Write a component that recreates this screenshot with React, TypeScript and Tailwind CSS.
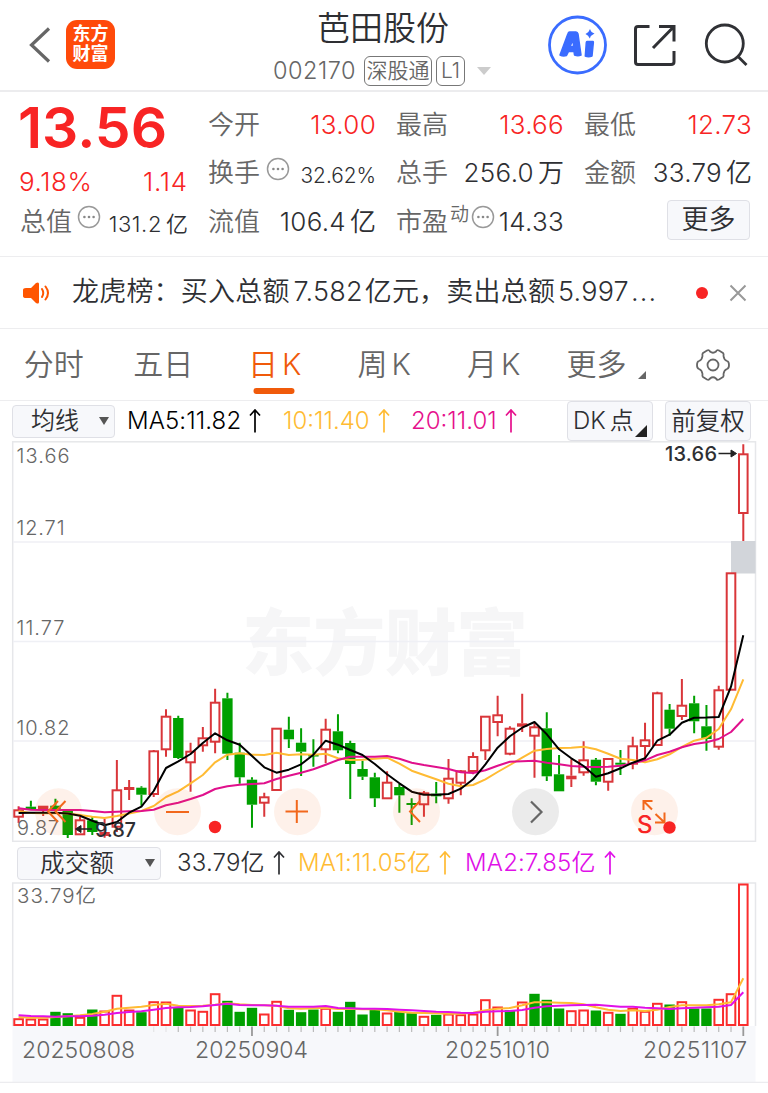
import type { ReactNode } from "react"
import clsx from "clsx"

// one row per trading day: [up, body top, body bottom, high, low, volume bar top]
const DAYS: [number, number, number, number, number, number][] = [
  [1, 810.3, 816.7, 806.3, 823, 1017.7],
  [0, 806.7, 809.3, 800.7, 810, 1018],
  [1, 805.7, 809.7, 805.7, 816, 1018],
  [0, 805.7, 810.7, 798.7, 811, 1011.3],
  [0, 811, 835, 811, 838, 1012.7],
  [1, 820.3, 834.3, 816.7, 834.5, 1016.3],
  [0, 820.3, 832, 816.7, 835, 1009],
  [1, 832, 836, 819, 837.7, 1010],
  [1, 790.3, 826.7, 760, 832, 994.3],
  [1, 787, 790, 780, 800, 1009],
  [0, 787.7, 794.7, 786.3, 805.7, 1011.7],
  [1, 751.3, 794, 750, 797, 1000.7],
  [1, 716.7, 749.3, 709.3, 756.7, 1001],
  [0, 718, 758, 715.7, 759, 1006.7],
  [1, 751.7, 762.3, 742.7, 791.7, 1009],
  [1, 738.3, 745.3, 727, 751.7, 1010.3],
  [1, 702.7, 741.7, 688.7, 753.3, 992.7],
  [0, 698.3, 753.7, 692.7, 760, 1000.3],
  [0, 752.7, 777.3, 742.7, 783.7, 1011.3],
  [0, 779.7, 804.7, 777.3, 827.7, 1007.3],
  [1, 797.3, 802.7, 792.7, 816.7, 1013],
  [1, 728.7, 790, 728.7, 790, 1000.3],
  [0, 729.7, 739.3, 716.7, 748, 1009.3],
  [0, 742.7, 751.7, 728.3, 776, 1011.7],
  [0, 755, 756, 739.3, 766.7, 1009],
  [1, 729.7, 749.3, 718.7, 763.3, 1007.3],
  [0, 731.3, 750.3, 714.3, 753.3, 1011.3],
  [0, 743, 764, 740.7, 799, 1001.3],
  [0, 769, 776.7, 760.7, 780, 1014],
  [0, 777.3, 798.3, 772.7, 807, 1009],
  [1, 782.7, 798.3, 771.3, 798.7, 1012],
  [0, 787, 795.3, 784, 812.7, 1011.3],
  [0, 803, 805, 798.3, 825, 1012.7],
  [1, 793.3, 804.3, 791, 816.7, 1015.3],
  [0, 793.7, 796.3, 782, 803.3, 1014.3],
  [1, 778.7, 798.3, 759, 803.7, 1013],
  [1, 771.3, 782.7, 770, 795.3, 1013.7],
  [1, 757, 771, 752.3, 774.3, 1013],
  [1, 716.7, 750.3, 716, 760, 998.7],
  [1, 715.3, 722, 695.7, 736.3, 1006],
  [1, 728.7, 753.7, 726.3, 755.3, 1009.7],
  [1, 723.3, 726.7, 693.7, 732, 1001],
  [1, 727.3, 735.7, 723.3, 777.7, 993.3],
  [0, 728.3, 776.3, 712.3, 781, 999.3],
  [0, 774.3, 791.3, 755, 791.3, 1008],
  [1, 775.7, 779.3, 759.3, 787, 1009.7],
  [1, 760.3, 772.3, 741.3, 775.7, 1009],
  [0, 759.7, 781.7, 758, 785.3, 1010],
  [1, 759, 781.7, 758, 790.7, 1011.3],
  [0, 762.7, 764.7, 750, 775, 1013.3],
  [1, 746.3, 763.7, 736.7, 769.3, 1007.3],
  [1, 740.3, 746, 722.7, 760, 1010.3],
  [1, 693.3, 745, 691.7, 745, 1002.3],
  [0, 709.7, 728.7, 704, 735.7, 1004],
  [1, 705.7, 716, 679, 720, 1000.7],
  [0, 703.3, 721.3, 695.7, 733.3, 1008],
  [0, 726.3, 739, 705, 750.7, 1008],
  [1, 690.3, 746.7, 685.7, 749.7, 998.3],
  [1, 573.3, 689.7, 573, 690, 992.7],
  [1, 454.3, 513, 444.3, 541, 883],
]

// volume bars of these days have the opposite colour of their candle
const FLIPPED_VOLUME = [1, 40, 42]

const MA5 = [
  813, 812.7, 812.7, 812.7, 813.5, 815.7, 820.7, 825.3, 822, 812.7, 806.7, 791, 768, 761.3, 754, 743, 733.3, 740.3,
  744.7, 756, 767.3, 772.7, 769.7, 764.3, 754.7, 740.7, 744.7, 750, 755, 764, 774.3, 783.3, 791.7, 794.7, 794.7, 794,
  788.7, 779.3, 764.3, 747.7, 736.3, 727.7, 722, 734.3, 749.3, 758.3, 766, 776.7, 773.3, 768.3, 762.7, 758.3, 740.7,
  734.7, 722.7, 717.7, 717.5, 717, 686.7, 635.3,
]
const MA10 = [
  811.3, 813, 813.3, 813, 813.5, 815, 816.7, 818, 816, 813.5, 811, 806, 797, 791.3, 783.3, 775, 762.3, 754.7, 753.3,
  754.7, 755, 752.7, 755, 754.3, 754.7, 753.7, 758.3, 760, 759.7, 758.7, 757.7, 763.7, 770.7, 775, 779.3, 783.7, 786.3,
  785, 779.3, 772, 765, 757.7, 750.7, 749, 748, 747.7, 746.7, 749.3, 753.7, 758.7, 760, 762.3, 759.3, 754.3, 747,
  740.7, 737.7, 729, 709.3, 679.3,
]
const MA20 = [
  808.3, 809.7, 810, 810, 810, 810, 811, 812.3, 811.7, 811.3, 811, 809.7, 805.3, 802.7, 799, 795, 789, 786.3, 784.7,
  784, 783.3, 779, 775.7, 772.7, 769.3, 764.7, 760, 756.7, 756.7, 756.7, 756, 758.7, 762.7, 765, 767, 769, 772.3, 773,
  770.3, 765.7, 761.7, 761.3, 760.7, 762.7, 764.3, 766, 766.7, 767, 766.7, 765.7, 763.3, 760.3, 755, 751.7, 747.3, 744,
  742.3, 739, 732, 719,
]
const VOL_MA1 = [
  1016, 1016.7, 1016.7, 1016, 1015.3, 1014.3, 1013, 1010.7, 1007.7, 1006.7, 1005.7, 1004, 1002.7, 1004.7, 1005, 1004.7,
  1003.7, 1002.3, 1003.3, 1004, 1004.3, 1004.7, 1007.3, 1007.7, 1007.3, 1006.7, 1008, 1007.7, 1008.3, 1008.3, 1009.3,
  1010.7, 1011.7, 1012, 1012.3, 1012.7, 1012.7, 1011.7, 1009.3, 1007.7, 1007, 1004.3, 1001.3, 1001.3, 1001.7, 1002,
  1003.3, 1006.3, 1008.7, 1010, 1009.3, 1010, 1008.7, 1006, 1004.3, 1004.3, 1004.3, 1003.3, 1001.3, 977.3,
]
const VOL_MA2 = [
  1014.3, 1015, 1015.3, 1015.7, 1015.3, 1015.3, 1014.7, 1013.7, 1012, 1011, 1010.3, 1008.7, 1007, 1006.3, 1006, 1005.3,
  1004, 1002.7, 1004, 1004.3, 1004.3, 1004.7, 1005.7, 1005.7, 1005.7, 1005, 1007, 1007.3, 1007.7, 1007.7, 1008, 1008.7,
  1009.3, 1010, 1010.7, 1011, 1011.7, 1012, 1010.7, 1010.3, 1010, 1009, 1006.7, 1005.3, 1004.7, 1004.3, 1004, 1003.7,
  1004.7, 1005.7, 1005.7, 1006.7, 1007.3, 1008, 1007.3, 1006.7, 1006.3, 1005.7, 1004, 991.3,
]

const xAt = (i: number) => 18.6 + i * 12.283
const toPoints = (ys: number[]) => ys.map((y, i) => `${xAt(i).toFixed(1)},${y}`).join(" ")

const Line = ({ ys, color }: { ys: number[]; color: string }) => (
  <polyline points={toPoints(ys)} fill="none" stroke={color} strokeWidth={2} strokeLinejoin="round" />
)

const Dots = ({ className }: { className?: string }) => (
  <svg viewBox="0 0 24 24" className={clsx("h-6 w-6 shrink-0", className)}>
    <circle cx="12" cy="12" r="10.5" fill="none" stroke="#999" strokeWidth="1.5" />
    <circle cx="7.4" cy="12" r="1.3" fill="#888" />
    <circle cx="12" cy="12" r="1.3" fill="#888" />
    <circle cx="16.6" cy="12" r="1.3" fill="#888" />
  </svg>
)

const UpArrow = () => (
  <svg viewBox="0 0 12 24" className="ml-2 h-6 w-3 shrink-0" fill="none" stroke="currentColor" strokeWidth="1.7">
    <path d="M6 1V23.500M1 6.500L6 1L11 6.500" />
  </svg>
)

const Header = () => (
  <header className="flex h-[92px] border-b-2 border-[#ececee]">
    <div className="flex w-[230px] items-center pl-7">
      <svg viewBox="0 0 24 40" className="h-10 w-6" fill="none" stroke="#666" strokeWidth="3.2">
        <path d="M21 3.500L3.500 20L21 36.500" />
      </svg>
      <div className="mb-0.5 ml-3.5 grid h-[49px] w-[49px] content-center rounded-[11px] bg-[#ff4a0a] text-center text-lg leading-[20px] font-bold text-white">
        <span>东方</span>
        <span>财富</span>
      </div>
    </div>
    <div className="flex w-[306px] flex-col items-center">
      <h1 className="mt-1 h-12 text-[33px] leading-[48px] text-[#2e2f33]">芭田股份</h1>
      <div className="mt-[3px] flex h-[31px] items-center pr-0.5 text-[#666]">
        <span className="mr-2 text-[23.500px] tracking-[0.5px]">002170</span>
        <span className="flex h-[30px] w-[68px] items-center justify-center rounded-md border border-[#777] text-[21px]">
          深股通
        </span>
        <span className="ml-1 flex h-[30px] w-[29px] items-center justify-center rounded-md border border-[#777] text-[21px]">
          L1
        </span>
        <svg viewBox="0 0 14 8" className="ml-3 h-2 w-3.5" fill="#ccc">
          <path d="M0 0h14l-7 8z" />
        </svg>
      </div>
    </div>
    <div className="flex flex-1 items-center pl-3">
      <svg viewBox="0 0 60 60" className="h-[60px] w-[60px]">
        <circle cx="29.500" cy="30" r="28" fill="none" stroke="#3a6cff" strokeWidth="2.800" />
        <path
          fill="#3a6cff"
          fillRule="evenodd"
          stroke="#3a6cff"
          strokeLinejoin="round"
          strokeWidth="1.5"
          d="M21.500 17h6.500Q29.500 17 30 19L33 40Q30 41.500 26.500 40L26 36.500H20.500L18.500 40.500Q15 41.500 12 40L20 18.500Q20.500 17 21.500 17zM25 25l-3 6.500h3.600zM39 26.500h6Q45.500 26.500 45.300 28L44 41Q40.500 42.500 37.300 41L38.300 27.500Q38.400 26.500 39 26.500z"
        />
        <path fill="#3a6cff" d="M42 14Q43 17.500 46.500 18.500Q43 20 41.800 23.500Q40.500 20 37.500 19Q41 17.500 42 14z" />
      </svg>
      <svg viewBox="0 0 44 44" className="ml-6 h-11 w-11" fill="none" stroke="#303135" strokeWidth="3">
        <path d="M17.500 3.500H6Q3.500 3.500 3.500 6V39Q3.500 41.500 6 41.500H39Q42 41.500 42 39V28" />
        <path d="M27 3.500H42V18.500M41.500 4L21 25" />
      </svg>
      <svg viewBox="0 0 48 48" className="ml-[26px] h-12 w-12" fill="none" stroke="#303135" strokeWidth="2.800">
        <circle cx="22.800" cy="22.500" r="18.500" />
        <path d="M35.500 35L44.500 44" />
      </svg>
    </div>
  </header>
)

type CellProps = { label: ReactNode; value: string; unit?: string; red?: boolean; size?: string }

const Cell = ({ label, value, unit, red, size = "text-[26px] tracking-[0.3px]" }: CellProps) => (
  <div className="flex h-[48.500px] items-center justify-between whitespace-nowrap">
    <span className="flex items-center text-[26px] text-[#666]">{label}</span>
    <span className={clsx(red ? "text-[#f82424]" : "text-[#2e2f33]", size)}>
      {value}
      {unit && <span className="ml-1 tracking-normal">{unit}</span>}
    </span>
  </div>
)

const Quote = () => (
  <section className="grid h-[165px] grid-cols-4 gap-x-5 border-b border-[#ededef] pt-2 pr-4 pl-5">
    <div>
      <div className="-ml-0.5 flex h-[55px] items-center text-[57px] font-semibold text-[#f82424]">13.56</div>
      <div className="flex h-[42px] items-center justify-between pt-2.5 text-[26px] text-[#f82424]">
        <span className="-ml-px tracking-[0.6px]">9.18%</span>
        <span className="tracking-[0.8px]">1.14</span>
      </div>
      <Cell label={<>总值<Dots className="mb-2 ml-[5px]" /></>} value="131.2" unit="亿" size="pt-1.5 text-[22px] tracking-[0.6px]" />
    </div>
    <div>
      <Cell label="今开" value="13.00" red />
      <Cell label={<>换手<Dots className="mb-2 ml-1.5" /></>} value="32.62%" size="pt-1.5 text-[20.800px]" />
      <Cell label="流值" value="106.4" unit="亿" />
    </div>
    <div>
      <Cell label="最高" value="13.66" red />
      <Cell label="总手" value="256.0" unit="万" />
      <Cell
        label={
          <>
            市盈<span className="mb-3 ml-0.5 text-[19px]">动</span>
            <Dots className="mb-2 ml-0.5" />
          </>
        }
        value="14.33"
      />
    </div>
    <div>
      <Cell label="最低" value="12.73" red />
      <Cell label="金额" value="33.79" unit="亿" />
      <button className="mt-[3px] mr-0.5 ml-auto flex h-10 w-[83px] items-center justify-center rounded border border-[#dfe0e6] bg-[#f7f8fb] text-[27px] text-[#2e2f33]">
        更多
      </button>
    </div>
  </section>
)

const Notice = () => (
  <section className="flex h-[72px] items-center border-b border-[#ededef] pr-[21px] pl-[22px]">
    <svg viewBox="0 0 28 24" className="h-6 w-7" fill="#ff5500">
      <path d="M4 7H9L14 2Q17 .5 17 3V21Q17 23.500 14 22L9 17H4Q1 17 1 15V9Q1 7 4 7z" />
      <path d="M20 8Q22.500 12 20 16M23.500 5.500Q28.500 12 23.500 18.500" fill="none" stroke="#ff5500" strokeWidth="2" strokeLinecap="round" />
    </svg>
    <p className="ml-[22px] w-[600px] text-[27px] tracking-[0.2px] whitespace-nowrap text-[#2e2f33]">
      龙虎榜：买入总额<span className="mr-0.5 ml-1">7.582</span>亿元，卖出总额<span className="ml-[3px]">5.997</span>
      <span className="ml-0.5 tracking-[1.200px]">...</span>
    </p>
    <span className="ml-6 h-3 w-3 rounded-full bg-[#f82424]" />
    <svg viewBox="0 0 18 18" className="ml-auto h-[18px] w-[18px]" stroke="#999" strokeWidth="2">
      <path d="M1.500 1.500L16.500 16.500M16.500 1.500L1.500 16.500" />
    </svg>
  </section>
)

const TABS = [
  ["分时", ""],
  ["五日", ""],
  ["日", "K"],
  ["周", "K"],
  ["月", "K"],
]

const Tabs = () => (
  <nav className="flex h-[72px] items-center border-b border-[#ededef] text-[30px] text-[#666]">
    {TABS.map(([name, suffix]) => {
      const active = name === "日"
      return (
        <div key={name} className={clsx("-ml-0.5 flex w-[111.500px] justify-center", suffix && "pl-1")}>
          <span className={clsx("relative flex gap-1", active && "text-[#f05a0a]")}>
            {name}
            {suffix && <span>{suffix}</span>}
            {active && <i className="absolute -bottom-[7px] left-[48%] h-1.5 w-[41px] -translate-x-1/2 rounded-full bg-[#f05a0a]" />}
          </span>
        </div>
      )
    })}
    <div className="flex w-[112px] items-end pl-[19px]">
      更多
      <svg viewBox="0 0 8 8" className="mb-2 ml-[11px] h-2 w-2 shrink-0" fill="#666">
        <path d="M8 0V8H0z" />
      </svg>
    </div>
    <svg viewBox="0 0 34 34" className="ml-9 h-[34px] w-[34px]" fill="none" stroke="#666" strokeWidth="1.8">
      <path
        strokeLinejoin="round"
        d="M11 2.500Q13 1.500 14 3.500Q17 6 20 3.500Q21 1.500 23 2.500L27 5Q28 6 27.500 8Q28 12 31 13Q33 13.500 33 17Q33 20.500 31 21Q28 22 27.500 26Q28 28 27 29L23 31.500Q21 32.500 20 30.500Q17 28 14 30.500Q13 32.500 11 31.500L7 29Q6 28 6.500 26Q6 22 3 21Q1 20.500 1 17Q1 13.500 3 13Q6 12 6.500 8Q6 6 7 5z"
      />
      <circle cx="17" cy="17" r="5.500" />
    </svg>
  </nav>
)

const MaBar = () => (
  <div className="flex h-10 items-center pl-3 text-[24px] whitespace-nowrap">
    <div className="flex h-[33px] w-[103px] items-center justify-between rounded border border-[#dfe0e6] bg-[#f7f8fb] pr-[5px] pl-[18px] text-[#2e2f33]">
      均线
      <svg viewBox="0 0 10 8" className="h-2 w-2.5" fill="#555">
        <path d="M0 0h10l-5 8z" />
      </svg>
    </div>
    <span className="ml-3 flex w-[156px] items-center tracking-[0.1px] text-black">
      MA5:11.82
      <UpArrow />
    </span>
    <span className="flex w-[128px] items-center text-[#ffbb33]">
      10:11.40
      <UpArrow />
    </span>
    <span className="flex w-[156px] items-center text-[#e6108c]">
      20:11.01
      <UpArrow />
    </span>
    <div className="relative flex h-10 w-[86px] items-center rounded border border-[#dfe0e6] bg-[#f7f8fb] pl-[5px] text-[#2e2f33]">
      DK<span className="ml-1">点</span>
      <svg viewBox="0 0 12 12" className="absolute right-[5px] bottom-[3px] h-3 w-3" fill="#222">
        <path d="M12 0V12H0z" />
      </svg>
    </div>
    <div className="ml-3 flex h-10 w-[86px] items-center justify-center rounded border border-[#dfe0e6] bg-[#f7f8fb] text-[24.500px] text-[#2e2f33]">
      前复权
    </div>
  </div>
)

const Candles = () => (
  <>
    {DAYS.map(([up, top, bottom, high, low], i) => {
      const x = xAt(i)
      const color = up ? "#d9363a" : "#00a000"
      const h = bottom - top
      return (
        <g key={i} stroke={color} strokeWidth={2}>
          <path d={`M${x} ${high}V${top}M${x} ${bottom}V${low}`} />
          {up && h > 4.5 ? (
            <rect x={x - 4.3} y={top} width={8.6} height={h} fill="none" />
          ) : (
            <rect x={x - 5.2} y={top} width={10.4} height={Math.max(h, 1.5)} fill={color} stroke="none" />
          )}
        </g>
      )
    })}
  </>
)

const BUTTONS = [58, 177, 297, 416, 535, 654]

const PriceChart = () => (
  <svg viewBox="0 441 768 401" className="block h-[401px] w-full">
    <text x="242" y="669" fontSize="72" fontWeight="900" fill="#f6f6f7" textLength="286">
      东方财富
    </text>
    <g stroke="#e6e7ea" strokeWidth="1.5" fill="none">
      <rect x="12.700" y="441.800" width="742.800" height="399.500" />
      <path d="M13 542H755M13 641.500H755M13 741H755" stroke="#eff0f5" />
    </g>
    <rect x="731" y="541" width="24.500" height="32.500" fill="#d2d5da" />
    <Candles />
    <Line ys={MA10} color="#ffbb33" />
    <Line ys={MA20} color="#e0108c" />
    <Line ys={MA5} color="#000" />
    <g fontSize="20" fill="#666">
      <text x="16.500" y="463" textLength="53">13.66</text>
      <text x="16.500" y="535" textLength="48">12.71</text>
      <text x="16.500" y="635" textLength="48">11.77</text>
      <text x="16.500" y="735" textLength="53">10.82</text>
      <text x="17" y="835" textLength="42">9.87</text>
    </g>
    <g fontSize="20" fontWeight="500" fill="#2e2f33">
      <text x="665" y="461" textLength="52">13.66</text>
      <text x="95" y="837" textLength="41">9.87</text>
    </g>
    <g fill="#222" stroke="#222" strokeWidth="1.5">
      <path d="M718.500 453.500H732" />
      <path d="M731 450L736.500 453.500L731 457z" strokeWidth="1" />
      <path d="M80 829H92" />
      <path d="M81 825.500L75.500 829L81 832.500z" strokeWidth="1" />
    </g>
    {BUTTONS.map((x) => (
      <circle key={x} cx={x + 0.5} cy="811.700" r="23.500" fill={x === 535 ? "#666" : "#f2580c"} fillOpacity={x === 535 ? 0.13 : 0.085} />
    ))}
    <g fill="none" stroke="#f2681c" strokeWidth="2">
      <path d="M58 801L48 811.500L58 822M65.500 801L55.500 811.500L65.500 822" />
      <path d="M166 812H189M285.500 811.500H308M296.800 800V823" />
      <path d="M420 801L410 811.500L420 822" />
      <path d="M652.500 801H643.500V810M644 801.500L652 809.500M655.500 814L664 822M664.500 812.500V822.500H655" />
    </g>
    <path d="M531 801.500L541.500 812L531 822.500" fill="none" stroke="#666" strokeWidth="2.200" />
    <circle cx="215" cy="827" r="6.200" fill="#f82424" />
    <circle cx="669.500" cy="827.500" r="6.200" fill="#f82424" />
    <text x="637" y="833" fontSize="24" fontWeight="500" fill="#f82424" textLength="15">
      S
    </text>
  </svg>
)

const VolumeBar = () => (
  <div className="flex h-10 items-center pt-0.5 pl-[17px] text-[24px] tracking-[0.2px] whitespace-nowrap">
    <div className="flex h-[33px] w-36 items-center justify-between rounded border border-[#dfe0e6] bg-[#f7f8fb] pr-[5px] pl-[22px] text-[#2e2f33]">
      <span className="text-[24.500px]">成交额</span>
      <svg viewBox="0 0 10 8" className="h-2 w-2.5" fill="#555">
        <path d="M0 0h10l-5 8z" />
      </svg>
    </div>
    <span className="ml-4 flex w-[121px] items-center text-[#2e2f33]">
      33.79亿
      <UpArrow />
    </span>
    <span className="flex w-[167px] items-center text-[#ffbb33]">
      MA1:11.05亿
      <UpArrow />
    </span>
    <span className="flex items-center text-[#e010e8]">
      MA2:7.85亿
      <UpArrow />
    </span>
  </div>
)

const VolumeChart = () => (
  <svg viewBox="0 881 768 201" className="block h-[201px] w-full">
    <rect x="12.500" y="1025" width="743" height="56.500" fill="#f7f8fb" />
    <path d="M12.700 1025V882H755.500V1025" fill="none" stroke="#e6e7ea" strokeWidth="1.500" />
    <path d="M0 1081.500H768" stroke="#ececef" strokeWidth="1.500" />
    {DAYS.map(([up, , , , , top], i) => {
      const red = FLIPPED_VOLUME.includes(i) ? !up : up
      return red ? (
        <rect key={i} x={xAt(i) - 4.3} y={top + 0.5} width={8.6} height={1023.5 - top} fill="none" stroke="#fa2d2d" strokeWidth={2} />
      ) : (
        <rect key={i} x={xAt(i) - 5.2} y={top - 0.5} width={10.4} height={1025.5 - top} fill="#00a000" />
      )
    })}
    {DAYS.map((_, i) =>
      i < 11 ? null : (
        <path
          key={i}
          d={`M${xAt(i)} 1025.500V${i % 20 === 19 ? 1035 : 1031}`}
          stroke={i % 20 === 19 ? "#999" : i < 13 ? "#e4e4e6" : "#bbb"}
          strokeWidth={i % 20 === 19 ? 1.8 : 1.2}
        />
      ),
    )}
    <Line ys={VOL_MA1} color="#ffbb33" />
    <Line ys={VOL_MA2} color="#e010e8" />
    <g fontSize="20.500" fill="#666">
      <text x="17" y="902" textLength="79">33.79亿</text>
      <g fontSize="23">
        <text x="22" y="1057" textLength="113">20250808</text>
        <text x="195" y="1057" textLength="113">20250904</text>
        <text x="445" y="1057" textLength="105">20251010</text>
        <text x="643" y="1057" textLength="104">20251107</text>
      </g>
    </g>
  </svg>
)

export default function App() {
  return (
    <main className="h-[1093px] w-[768px] overflow-hidden bg-white font-['Inter','Noto_Sans_CJK_SC',sans-serif] font-[350]">
      <Header />
      <Quote />
      <Notice />
      <Tabs />
      <MaBar />
      <PriceChart />
      <VolumeBar />
      <VolumeChart />
    </main>
  )
}
